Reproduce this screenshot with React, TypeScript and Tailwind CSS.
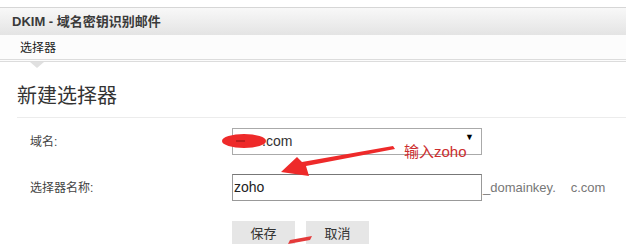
import React from 'react';

const font = { fontFamily: '"Liberation Sans", "Noto Sans CJK SC", sans-serif' };

const FormRow: React.FC<{ label: string; children: React.ReactNode }> = ({ label, children }) => (
  <div className="flex items-center h-[27px]">
    <div className="w-[232px] pl-[30px] text-[12px] text-[#444]">{label}</div>
    {children}
  </div>
);

export default function App() {
  return (
    <div className="relative w-[626px] h-[244px] bg-white overflow-hidden" style={font}>
      <div className="h-[7px] bg-white" />
      {/* header bar */}
      <div className="h-[28px] border-t border-[#d6d6d6] bg-gradient-to-b from-[#f8f8f8] to-[#e4e4e4] flex items-center pl-[12px]">
        <span className="text-[13px] font-bold text-[#3a3a3a]">DKIM - 域名密钥识别邮件</span>
      </div>
      {/* tab row */}
      <div className="relative h-[27px] bg-[#fcfcfc] border-b-[3px] border-double border-[#dcdcdc] flex items-center pl-[20px] pt-[2px]">
        <span className="text-[12px] text-[#222]">选择器</span>
        <div className="absolute left-[30px] -bottom-[9px] w-0 h-0 border-l-[7px] border-r-[7px] border-t-[6px] border-l-transparent border-r-transparent border-t-[#e0e0e0]" />
      </div>

      <div className="pl-[17px] pt-[22px]">
        <div className="text-[20px] text-[#333] leading-[24px]">新建选择器</div>
        <div className="mt-[9px] h-px bg-[#ececec]" />
      </div>

      <div className="flex flex-col gap-[19px] pt-[10px]">
        <FormRow label="域名:">
          <div className="w-[250px] h-[27px] border border-[#aaa] flex items-center justify-between pl-[29px] pr-[7px] text-[14px] text-[#333]">
            <span>.com</span>
            <span className="text-[9px] text-black -mt-[8px]">▼</span>
          </div>
        </FormRow>
        <FormRow label="选择器名称:">
          <div className="w-[250px] h-[27px] border border-[#999] border-t-[#777] flex items-center pl-[1px] text-[14px] text-[#222]">
            zoho
          </div>
          <span className="ml-[1px] text-[13px] text-[#777]">_domainkey.</span>
          <span className="ml-[15px] text-[13px] text-[#777]">c.com</span>
        </FormRow>
      </div>

      <div className="flex gap-[11px] pl-[232px] pt-[20px]">
        <button className="w-[63px] h-[26px] bg-[#e6e6e6] text-[13px] text-[#333]">保存</button>
        <button className="w-[63px] h-[26px] bg-[#e6e6e6] text-[13px] text-[#333]">取消</button>
      </div>

      {/* red annotations */}
      <svg className="absolute left-0 top-0 pointer-events-none" width="626" height="244">
        <ellipse cx="244" cy="141" rx="22" ry="7" fill="#ee2a2a" />
        <line x1="236" y1="141" x2="245" y2="141" stroke="#8a1515" strokeWidth="1" />
        <path d="M393 146 L395 149 L306 166 L309 176 L281 172 L297 157 L302 162 Z" fill="#ee2a2a" />
        <path d="M288 244 L290 240 L312 236 L310 240 Z" fill="#e43a3a" />
      </svg>
      <div className="absolute left-[404px] top-[142px] text-[15px] text-[#cc2e2e] leading-[20px]">输入zoho</div>
    </div>
  );
}
